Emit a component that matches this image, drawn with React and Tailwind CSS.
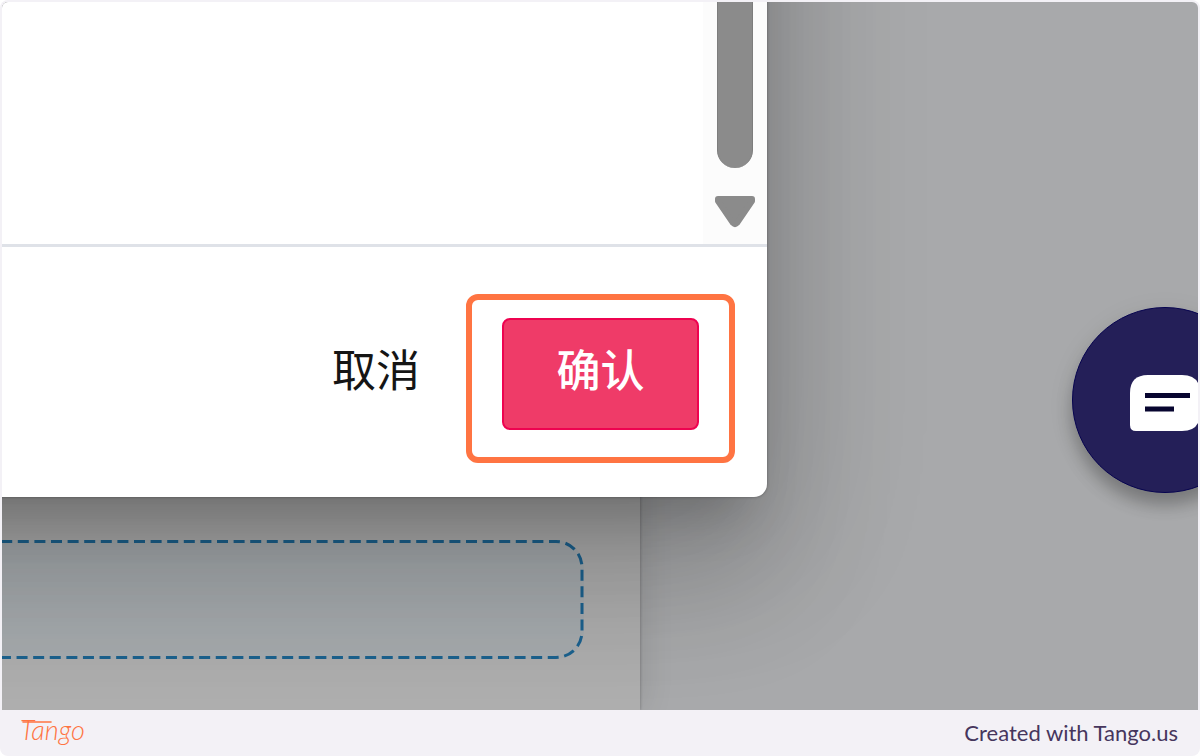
function TangoLogo() {
  return (
    <svg
      role="img"
      aria-label="Tango"
      className="h-10 w-20 overflow-visible text-[#ff7442]"
      viewBox="0 0 80 40"
    >
      <text
        x="0"
        y="27"
        fill="currentColor"
        className="font-['Lato',sans-serif] text-[27px] italic"
        fontWeight="300"
      >
        Tango
      </text>
      <path d="M3 9H31" stroke="currentColor" strokeWidth="1.6" strokeLinecap="round" />
    </svg>
  );
}

function ChatIcon() {
  return (
    <svg aria-hidden="true" className="h-14 w-[70px]" viewBox="0 0 70 56">
      <path
        d="M18 0H52Q70 0 70 18V38Q70 56 52 56H6Q0 56 0 50V18Q0 0 18 0Z"
        fill="#fff"
      />
      <path d="M15 20.5H60M15 34H44" stroke="#07052f" strokeWidth="5" />
    </svg>
  );
}

function Scrollbar() {
  return (
    <div aria-hidden="true" className="flex w-16 flex-col items-center gap-7 bg-[#fcfcfc] pb-4">
      <div className="w-9 flex-1 rounded-b-full border-x border-[#7d7d7d] bg-[#8b8b8b]" />
      <svg className="h-8 w-[42px]" viewBox="0 0 42 32">
        <path
          d="M4 3H38L38 5L23 27Q21 29 19 27L4 5Z"
          fill="#8b8b8b"
          stroke="#8b8b8b"
          strokeWidth="6"
          strokeLinejoin="round"
        />
      </svg>
    </div>
  );
}

function Dialog() {
  return (
    <div
      role="dialog"
      aria-label="确认"
      className="absolute -left-60 -top-60 bottom-[213px] right-[431px] flex flex-col rounded-[13px] bg-white shadow-[0_0_3px_rgba(0,0,0,0.35),0_36px_50px_-23px_rgba(0,0,0,0.2),0_79px_125px_10px_rgba(0,0,0,0.14),0_30px_151px_26px_rgba(0,0,0,0.12)]"
    >
      <div className="flex flex-1 justify-end border-b-3 border-[#dfe2e8]">
        <Scrollbar />
      </div>
      <div className="flex h-[250px] items-start justify-end pr-8 pt-[47px]">
        <button
          type="button"
          className="mr-[46px] mt-6 flex h-28 items-center pb-1 text-[44px] leading-none text-[#151515]"
        >
          取消
        </button>
        <div className="rounded-xl border-6 border-[#ff7442] px-[30px] pb-[27px] pt-[18px]">
          <button
            type="button"
            className="flex h-28 w-[197px] items-center justify-center rounded-lg border-2 border-[#ee0350] bg-[#ef3b68] pb-1 text-[44px] font-medium leading-none text-white"
          >
            确认
          </button>
        </div>
      </div>
    </div>
  );
}

function DropZone() {
  return (
    <div className="relative mb-[51px] mr-14 h-[119px] rounded-r-[28px] bg-[#3387b9]/6">
      <svg aria-hidden="true" className="absolute inset-0 h-full w-full overflow-visible">
        <rect
          x="-60"
          y="1.5"
          rx="26"
          fill="none"
          stroke="#1c628f"
          strokeWidth="3"
          strokeDasharray="11 5.6"
          className="h-[116px] w-[calc(100%+58px)]"
        />
      </svg>
    </div>
  );
}

export default function App() {
  return (
    <div className="flex min-h-screen flex-col bg-white font-['Liberation_Sans','Noto_Sans_CJK_SC',sans-serif]">
      <div className="flex flex-1 flex-col overflow-hidden rounded-lg bg-[#f3f1f6] px-0.5 pt-0.5">
        <main className="relative flex flex-1 overflow-hidden rounded-t-md bg-[#a8a9ab]">
          <section className="flex w-[638px] flex-col justify-end bg-[#aeaeae] shadow-[0_0_3px_rgba(0,0,0,0.3),3px_0_30px_rgba(0,0,0,0.1)]">
            <DropZone />
          </section>
          <Dialog />
          <button
            type="button"
            aria-label="Chat"
            className="absolute -right-[60px] top-[305px] flex size-[186px] items-center justify-center rounded-full border border-[#06034f] bg-[#241f58] pt-1.5 shadow-[0_12px_16px_rgba(0,0,0,0.25),0_6px_30px_rgba(0,0,0,0.06)]"
          >
            <ChatIcon />
          </button>
        </main>
        <footer className="flex h-[46px] items-center justify-between pl-[18px] pr-5">
          <TangoLogo />
          <a
            href="https://tango.us"
            className="font-['Lato',sans-serif] text-[22px] leading-6 text-[#46365d]"
          >
            Created with Tango.us
          </a>
        </footer>
      </div>
    </div>
  );
}
